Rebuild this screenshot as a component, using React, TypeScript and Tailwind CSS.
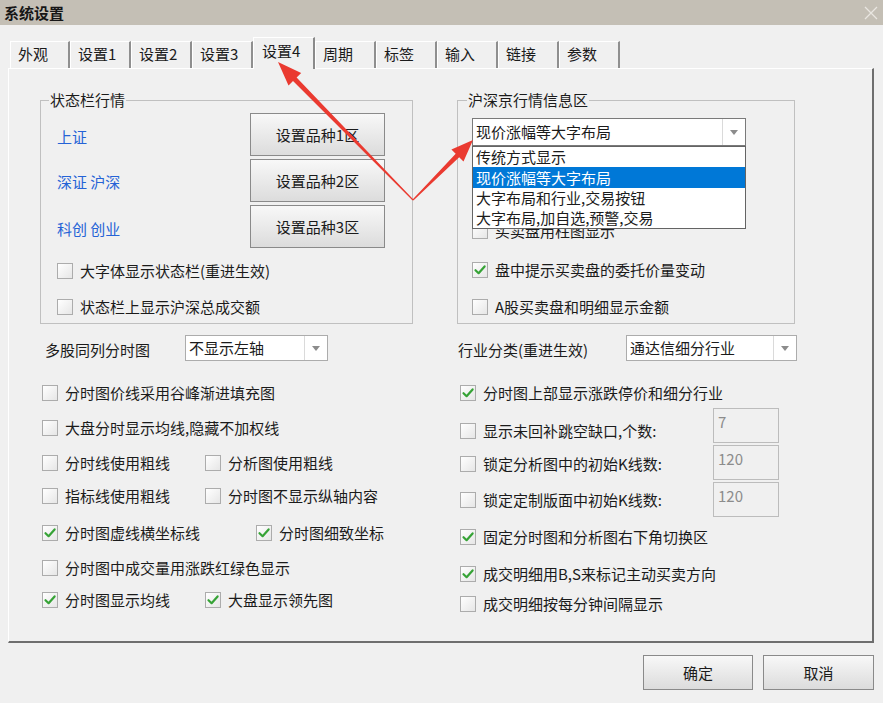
import React from "react";

function Box({ checked }: { checked?: boolean }) {
  return (
    <span className="w-[16px] h-[16px] shrink-0 border border-[#acacac] bg-linear-to-br from-[#ffffff] to-[#e6e6e6] flex items-center justify-center">
      {checked && (
        <svg width="14" height="14" viewBox="0 0 14 14">
          <path d="M2.5 7.2 L5.6 10.2 L11.6 3.4" stroke="#36a336" strokeWidth="2.2" fill="none" strokeLinecap="round" strokeLinejoin="round" />
        </svg>
      )}
    </span>
  );
}

function Check({ label, checked, className }: { label: string; checked?: boolean; className?: string }) {
  return (
    <div className={"flex items-center gap-[7px] h-[24px] whitespace-nowrap " + (className ?? "")}>
      <Box checked={checked} />
      <span>{label}</span>
    </div>
  );
}

function Combo({ value, className, open }: { value: string; className?: string; open?: boolean }) {
  return (
    <div className={"flex bg-white border " + (open ? "border-[#7a7a7a] " : "border-[#acacac] ") + (className ?? "")}>
      <div className="flex-1 flex items-center pl-[3px] overflow-hidden whitespace-nowrap">{value}</div>
      <div className="w-[23px] border-l border-[#dadada] flex items-center justify-center">
        <svg width="8" height="5" viewBox="0 0 8 5">
          <path d="M0 0 H8 L4 5 Z" fill="#8c8c8c" />
        </svg>
      </div>
    </div>
  );
}

function Btn({ label, className }: { label: string; className?: string }) {
  return (
    <div className={"flex items-center justify-center border border-[#8a8a8a] bg-linear-to-b from-[#f8f8f8] to-[#dcdcdc] " + (className ?? "")}>
      {label}
    </div>
  );
}

function NumBox({ value }: { value: string }) {
  return (
    <div className="w-[66px] h-[35px] shrink-0 border border-[#bcbcbc] bg-[#f0f0f0] text-[#8c8c8c] pl-[4px] pt-[3px]">{value}</div>
  );
}

const tabs = ["外观", "设置1", "设置2", "设置3", "设置4", "周期", "标签", "输入", "链接", "参数"];

export default function App() {
  return (
    <div className="relative w-[883px] h-[703px] overflow-hidden bg-[#f0f0f0] text-[15px] leading-[20px] text-[#1b1b1b] font-['Noto_Sans_CJK_SC','Noto_Sans',sans-serif]">
      {/* title bar */}
      <div className="h-[25px] bg-[#c4bfb5] flex items-center justify-between pl-[4px] pr-[5px]">
        <span className="font-bold text-[#161616]">系统设置</span>
        <svg width="14" height="14" viewBox="0 0 14 14">
          <path d="M1 1 L13 13 M13 1 L1 13" stroke="#e9e6e1" strokeWidth="1.3" />
        </svg>
      </div>

      {/* tabs */}
      <div className="h-[43px] flex items-end pl-[10px]">
        {tabs.map((t, i) =>
          i === 4 ? (
            <div
              key={t}
              className="relative z-10 w-[62px] h-[32px] -mb-[1px] bg-[#f0f0f0] border-t border-l border-white border-r-2 border-r-[#8a8a8a] pl-[8px] pt-[3px]"
            >
              {t}
            </div>
          ) : (
            <div
              key={t}
              className={
                "h-[27px] border-t border-l border-white border-r-2 border-r-[#8f8f8f] pl-[7px] pt-[2px] " +
                (i === 0 ? "w-[60px]" : "w-[61px]")
              }
            >
              {t}
            </div>
          )
        )}
      </div>

      {/* tab panel */}
      <div className="ml-[8px] w-[866px] h-[575px] border-t border-l border-white border-r-2 border-b-2 border-r-[#6e6e6e] border-b-[#6e6e6e] pl-[31px] pt-[31px]">
        <div className="grid grid-cols-[417px_345px]">
          {/* left column */}
          <div className="flex flex-col">
            <div className="relative w-[373px] h-[224px] border border-[#c0c0c0]">
              <span className="absolute left-[8px] -top-[11px] px-[1px] bg-[#f0f0f0]">状态栏行情</span>
              <div className="flex pt-[12px] pl-[16px]">
                <div className="flex flex-col gap-[3px] w-[193px] text-[#2563d6]">
                  <div className="h-[43px] flex items-center pt-[5px]">上证</div>
                  <div className="h-[43px] flex items-center pt-[3px]">深证 沪深</div>
                  <div className="h-[43px] flex items-center pt-[5px]">科创 创业</div>
                </div>
                <div className="flex flex-col gap-[3px]">
                  <Btn label="设置品种1区" className="w-[135px] h-[43px]" />
                  <Btn label="设置品种2区" className="w-[135px] h-[43px]" />
                  <Btn label="设置品种3区" className="w-[135px] h-[43px]" />
                </div>
              </div>
              <div className="pl-[16px] mt-[11px]">
                <Check label="大字体显示状态栏(重进生效)" />
                <Check label="状态栏上显示沪深总成交额" className="mt-[12px]" />
              </div>
            </div>

            <div className="mt-[11px] flex items-center h-[26px]">
              <div className="w-[145px] pl-[5px] pt-[3px]">多股同列分时图</div>
              <Combo value="不显示左轴" className="w-[143px] h-[26px]" />
            </div>

            <div className="pl-[2px] flex flex-col">
              <Check className="mt-[20px]" label="分时图价线采用谷峰渐进填充图" />
              <Check className="mt-[11px]" label="大盘分时显示均线,隐藏不加权线" />
              <div className="mt-[11px] flex">
                <Check className="w-[163px]" label="分时线使用粗线" />
                <Check label="分析图使用粗线" />
              </div>
              <div className="mt-[9px] flex">
                <Check className="w-[163px]" label="指标线使用粗线" />
                <Check label="分时图不显示纵轴内容" />
              </div>
              <div className="mt-[13px] flex">
                <Check className="w-[214px]" checked label="分时图虚线横坐标线" />
                <Check checked label="分时图细致坐标" />
              </div>
              <Check className="mt-[11px]" label="分时图中成交量用涨跌红绿色显示" />
              <div className="mt-[8px] flex">
                <Check className="w-[163px]" checked label="分时图显示均线" />
                <Check checked label="大盘显示领先图" />
              </div>
            </div>
          </div>

          {/* right column */}
          <div className="flex flex-col">
            <div className="relative w-[338px] h-[224px] border border-[#c0c0c0]">
              <span className="absolute left-[9px] -top-[11px] px-[1px] bg-[#f0f0f0]">沪深京行情信息区</span>
              <div className="pl-[14px] pt-[17px]">
                <div className="relative w-[274px]">
                  <Combo open value="现价涨幅等大字布局" className="w-[274px] h-[28px]" />
                  <div className="absolute z-10 left-0 top-[28px] w-[274px] border border-[#646464] bg-white">
                    <div className="h-[20px] px-[3px] flex items-center whitespace-nowrap">传统方式显示</div>
                    <div className="h-[21px] px-[3px] flex items-center whitespace-nowrap bg-[#0078d7] text-white">现价涨幅等大字布局</div>
                    <div className="h-[20px] px-[3px] flex items-center whitespace-nowrap">大字布局和行业,交易按钮</div>
                    <div className="h-[20px] px-[3px] flex items-center whitespace-nowrap">大字布局,加自选,预警,交易</div>
                  </div>
                </div>
                <Check className="mt-[73px]" label="买卖盘用柱图显示" />
                <Check className="mt-[15px]" checked label="盘中提示买卖盘的委托价量变动" />
                <Check className="mt-[13px]" label="A股买卖盘和明细显示金额" />
              </div>
            </div>

            <div className="mt-[11px] flex items-center h-[26px]">
              <div className="w-[169px] pl-[1px] pt-[3px]">行业分类(重进生效)</div>
              <Combo value="通达信细分行业" className="w-[171px] h-[26px]" />
            </div>

            <div className="pl-[3px] flex flex-col">
              <Check className="mt-[20px]" checked label="分时图上部显示涨跌停价和细分行业" />
              <div className="mt-[3px] h-[35px] flex items-center">
                <Check className="w-[253px] mt-[10px]" label="显示未回补跳空缺口,个数:" />
                <NumBox value="7" />
              </div>
              <div className="mt-[2px] h-[35px] flex items-center">
                <Check className="w-[253px] mt-[3px]" label="锁定分析图中的初始K线数:" />
                <NumBox value="120" />
              </div>
              <div className="mt-[2px] h-[35px] flex items-center">
                <Check className="w-[253px]" label="锁定定制版面中初始K线数:" />
                <NumBox value="120" />
              </div>
              <Check className="mt-[8px]" checked label="固定分时图和分析图右下角切换区" />
              <Check className="mt-[13px]" checked label="成交明细用B,S来标记主动买卖方向" />
              <Check className="mt-[6px]" label="成交明细按每分钟间隔显示" />
            </div>
          </div>
        </div>
      </div>

      {/* footer buttons */}
      <div className="mt-[12px] flex justify-end gap-[10px] pr-[9px]">
        <Btn label="确定" className="w-[110px] h-[35px]" />
        <Btn label="取消" className="w-[111px] h-[35px]" />
      </div>

      {/* red annotation arrows */}
      <svg className="absolute left-0 top-0 z-20 pointer-events-none" width="883" height="703" viewBox="0 0 883 703">
        <polygon
          fill="#ea3a30"
          points="278,62 301.2,73.1 296.6,77.4 413.4,199.6 412.6,200.4 293,80.9 288.5,85.4"
        />
        <polygon
          fill="#ea3a30"
          points="473,140 463.5,161.6 459.2,157.3 413.4,200.4 412.6,199.6 455.7,153.8 451.4,149.5"
        />
      </svg>
    </div>
  );
}
